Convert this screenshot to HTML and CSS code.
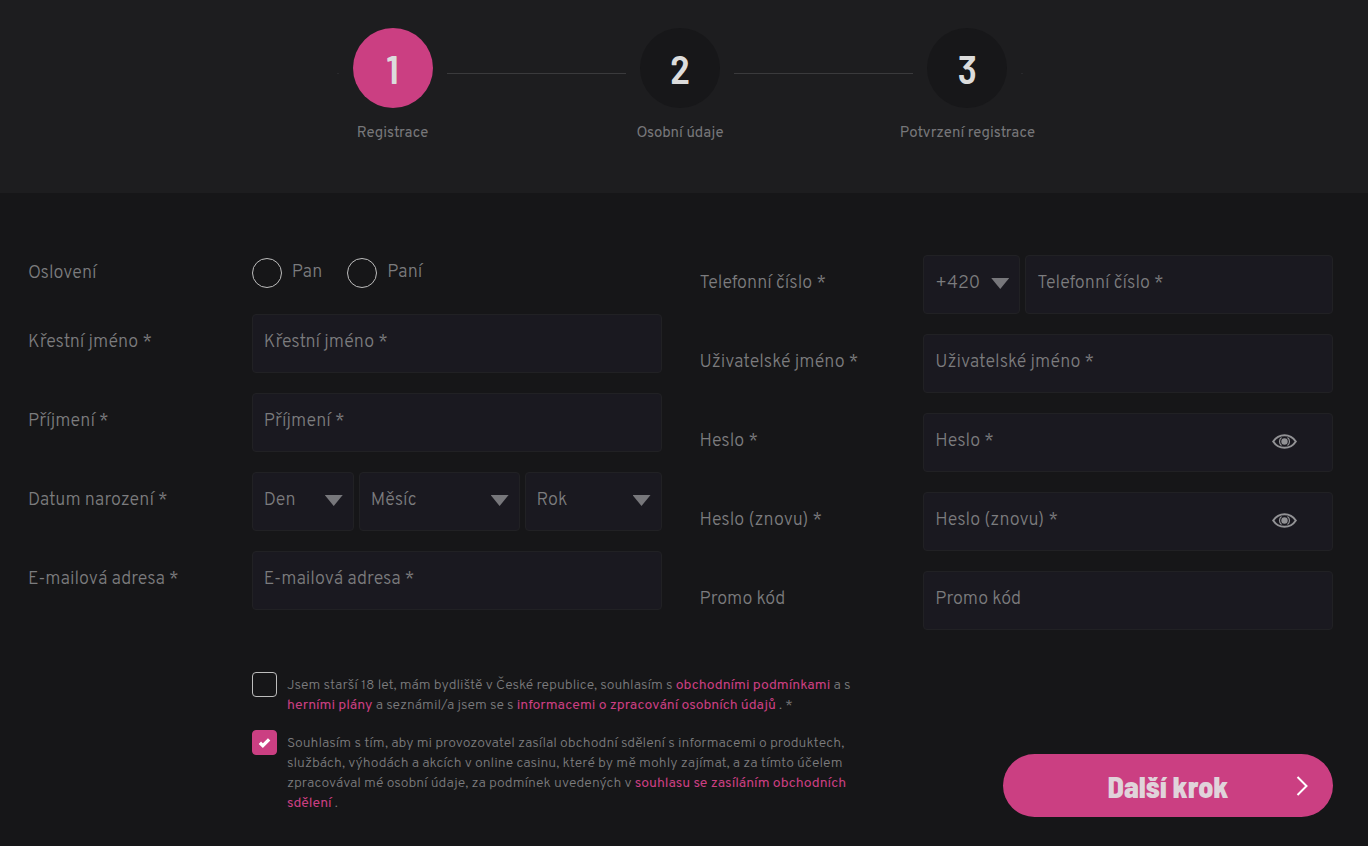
FILE: index.html
```html
<!DOCTYPE html>
<html lang="cs">
<head>
<meta charset="utf-8">
<meta name="viewport" content="width=device-width, initial-scale=1">
<title>Registrace</title>
<link rel="stylesheet" href="styles.css">
</head>
<body>
<header class="progress">
  <ol class="steps">
    <li class="step step-active"><span class="line line-stub line-start"></span><span class="circle">1</span><span class="line"></span><span class="step-name">Registrace</span></li>
    <li class="step"><span class="line"></span><span class="circle">2</span><span class="line"></span><span class="step-name">Osobní údaje</span></li>
    <li class="step"><span class="line"></span><span class="circle">3</span><span class="line line-stub"></span><span class="step-name">Potvrzení registrace</span></li>
  </ol>
</header>
<main>
<form class="form">
  <div class="columns">
    <div class="column">
      <div class="row row-radio" role="radiogroup" aria-labelledby="title-label">
        <span class="label" id="title-label">Oslovení</span>
        <div class="radios">
          <label class="radio"><input type="radio" name="title"><span>Pan</span></label>
          <label class="radio"><input type="radio" name="title"><span>Paní</span></label>
        </div>
      </div>
      <div class="row">
        <label class="label" for="first">Křestní jméno *</label>
        <input class="field" id="first" type="text" placeholder="Křestní jméno *">
      </div>
      <div class="row">
        <label class="label" for="last">Příjmení *</label>
        <input class="field" id="last" type="text" placeholder="Příjmení *">
      </div>
      <div class="row">
        <label class="label" for="day">Datum narození *</label>
        <div class="date">
          <span class="select"><select class="field" id="day"><option>Den</option></select></span>
          <span class="select"><select class="field" aria-label="Měsíc"><option>Měsíc</option></select></span>
          <span class="select"><select class="field" aria-label="Rok"><option>Rok</option></select></span>
        </div>
      </div>
      <div class="row">
        <label class="label" for="email">E-mailová adresa *</label>
        <input class="field" id="email" type="email" placeholder="E-mailová adresa *">
      </div>
    </div>
    <div class="column">
      <div class="row">
        <label class="label" for="phone">Telefonní číslo *</label>
        <div class="phone">
          <span class="select"><select class="field" aria-label="Předvolba"><option>+420</option></select></span>
          <input class="field" id="phone" type="tel" placeholder="Telefonní číslo *">
        </div>
      </div>
      <div class="row">
        <label class="label" for="user">Uživatelské jméno *</label>
        <input class="field" id="user" type="text" placeholder="Uživatelské jméno *">
      </div>
      <div class="row">
        <label class="label" for="pass">Heslo *</label>
        <div class="password">
          <input class="field" id="pass" type="password" placeholder="Heslo *">
          <button class="eye" type="button" aria-label="Zobrazit heslo"><svg viewBox="0 0 25 15"><path d="M1.2 7.5C4 3.2 8 1.2 12.500 1.200S21 3.200 23.800 7.500C21 11.800 17 13.800 12.500 13.800S4 11.800 1.200 7.500Z" fill="none" stroke="currentColor" stroke-width="2"/><path d="M9.500 3.500A5 5 0 0 0 9.500 11.500M15.500 3.500A5 5 0 0 1 15.500 11.500" fill="none" stroke="currentColor" stroke-width="1.200"/><circle cx="12.500" cy="7.500" r="3.200" fill="currentColor"/></svg></button>
        </div>
      </div>
      <div class="row">
        <label class="label" for="pass2">Heslo (znovu) *</label>
        <div class="password">
          <input class="field" id="pass2" type="password" placeholder="Heslo (znovu) *">
          <button class="eye" type="button" aria-label="Zobrazit heslo"><svg viewBox="0 0 25 15"><path d="M1.2 7.5C4 3.2 8 1.2 12.500 1.200S21 3.200 23.800 7.500C21 11.800 17 13.800 12.500 13.800S4 11.800 1.200 7.500Z" fill="none" stroke="currentColor" stroke-width="2"/><path d="M9.500 3.500A5 5 0 0 0 9.500 11.500M15.500 3.500A5 5 0 0 1 15.500 11.500" fill="none" stroke="currentColor" stroke-width="1.200"/><circle cx="12.500" cy="7.500" r="3.200" fill="currentColor"/></svg></button>
        </div>
      </div>
      <div class="row">
        <label class="label" for="promo">Promo kód</label>
        <input class="field" id="promo" type="text" placeholder="Promo kód">
      </div>
    </div>
  </div>
  <div class="bottom">
    <div class="consents">
      <div class="consent">
        <input class="check" type="checkbox" id="terms">
        <label for="terms">Jsem starší 18 let, mám bydliště v České republice, souhlasím s <a href="#">obchodními podmínkami</a> a s<br> <a href="#">herními plány</a> a seznámil/a jsem se s <a href="#">informacemi o zpracování osobních údajů</a> . *</label>
      </div>
      <div class="consent">
        <span class="check-box"><input class="check" type="checkbox" id="news" checked><svg class="tick" viewBox="0 0 14 12"><path d="M2 6.200 5.200 9.300 12 2.500" fill="none" stroke="#fff" stroke-width="3.600"/></svg></span>
        <label for="news">Souhlasím s tím, aby mi provozovatel zasílal obchodní sdělení s informacemi o produktech,<br> službách, výhodách a akcích v online casinu, které by mě mohly zajímat, a za tímto účelem<br> zpracovával mé osobní údaje, za podmínek uvedených v <a href="#">souhlasu se zasíláním obchodních<br> sdělení</a> .</label>
      </div>
    </div>
    <button class="next" type="submit"><span>Další krok</span><svg class="chevron" viewBox="0 0 12 20"><path d="M1.500 1 10.500 10 1.500 19" fill="none" stroke="#fff" stroke-width="2"/></svg></button>
  </div>
</form>
</main>
</body>
</html>
```
FILE: styles.css
```css
* { box-sizing: border-box; }

body {
  margin: 0;
  background: #161618;
  color: #7c7c7e;
  font-family: Overpass, Roboto, "Liberation Sans", sans-serif;
  font-size: 18px;
  font-weight: 300;
  line-height: 24px;
}

.progress {
  padding: 28px 8px 49px 0;
  background: #1d1d1f;
}

.steps {
  display: grid;
  grid-template-columns: repeat(3, 1fr);
  width: 63.4%;
  margin: 0 auto;
  padding: 0;
  list-style: none;
}

.step {
  display: grid;
  grid-template-columns: 1fr 80px 1fr;
  column-gap: 14px;
  row-gap: 16px;
}

.line {
  height: 1px;
  margin-top: 45px;
  background: #3a3a3c;
}

.line-stub {
  width: 2px;
  background: #29292c;
}

.line-start { justify-self: end; }

.circle {
  display: grid;
  place-items: center;
  height: 80px;
  border-radius: 50%;
  background: #171719;
  color: #dcdcdc;
  font-family: "Barlow Semi Condensed", "Barlow Condensed", Roboto, sans-serif;
  font-size: 40px;
  font-weight: 600;
  line-height: 40px;
}

.step-active .circle { background: #cb3f82; }

.step-name {
  grid-column: 1 / -1;
  color: #77777a;
  font-size: 15px;
  font-weight: 400;
  line-height: 20px;
  text-align: center;
}

.form { padding: 62px 35px 29px 28px; }

.columns {
  display: grid;
  grid-template-columns: 1fr 1fr;
  gap: 38px;
}

.column {
  display: flex;
  flex-direction: column;
  gap: 20px;
}

.row {
  display: grid;
  grid-template-columns: 224fr 410fr;
  align-items: center;
}

.row-radio { min-height: 39px; }

.label { padding-bottom: 1px; }

.field {
  display: block;
  width: 100%;
  height: 59px;
  padding: 0 11px 3px;
  border: 1px solid #212124;
  border-radius: 4px;
  background: #1a1920;
  color: #7c7c7e;
  font: inherit;
  appearance: none;
}

select.field { padding-bottom: 2px; }

.field::placeholder {
  color: #7c7c7e;
  opacity: 1;
}

.radios {
  display: flex;
  gap: 25px;
  padding-bottom: 3px;
}

.radio {
  display: flex;
  gap: 10px;
}

.radio span { padding-top: 3px; }

.radio input {
  width: 30px;
  height: 30px;
  margin: 0;
  border: 1px solid #bdbdbd;
  border-radius: 50%;
  appearance: none;
}

.date,
.phone {
  display: grid;
  gap: 5px;
}

.date { grid-template-columns: 102fr 161fr 137fr; }

.phone { grid-template-columns: 97fr 308fr; }

.select,
.password,
.check-box { position: relative; }

.select::after {
  content: "";
  position: absolute;
  top: 23px;
  right: 11px;
  width: 18px;
  height: 11px;
  background: #77777b;
  clip-path: polygon(0 0, 100% 0, 50% 100%);
  pointer-events: none;
}

.eye {
  position: absolute;
  top: 21px;
  right: 36px;
  width: 25px;
  height: 15px;
  padding: 0;
  border: 0;
  background: none;
  color: #929295;
}

.eye svg { display: block; }

.bottom {
  display: flex;
  align-items: flex-end;
  justify-content: space-between;
  margin-top: 42px;
}

.consents {
  display: flex;
  flex-direction: column;
  gap: 18px;
  margin-left: 224px;
  padding-bottom: 7px;
  font-size: 14px;
  line-height: 20px;
}

.consent {
  display: flex;
  gap: 10px;
}

.consent label { padding-top: 4px; margin-bottom: -4px; }

.check {
  display: block;
  flex: none;
  width: 25px;
  height: 25px;
  margin: 0;
  border: 1px solid #bdbdbd;
  border-radius: 4px;
  appearance: none;
}

.check:checked {
  border-color: #cb3f82;
  background: #cb3f82;
}

.tick {
  position: absolute;
  top: 7px;
  left: 6px;
  width: 13px;
  pointer-events: none;
}

a {
  color: #cb3f82;
  font-weight: 400;
  text-decoration: none;
}

.next {
  display: grid;
  grid-template-columns: 1fr auto 1fr;
  align-items: center;
  width: 330px;
  height: 63px;
  padding: 0 25px;
  border: 0;
  border-radius: 32px;
  background: #cb3f82;
  color: #e0d3da;
  font-family: "Barlow Semi Condensed", "Barlow Condensed", Roboto, sans-serif;
  font-size: 30px;
  font-weight: 800;
}

.next span { grid-column: 2; }

.chevron {
  justify-self: end;
  width: 12px;
  height: 20px;
}
```
